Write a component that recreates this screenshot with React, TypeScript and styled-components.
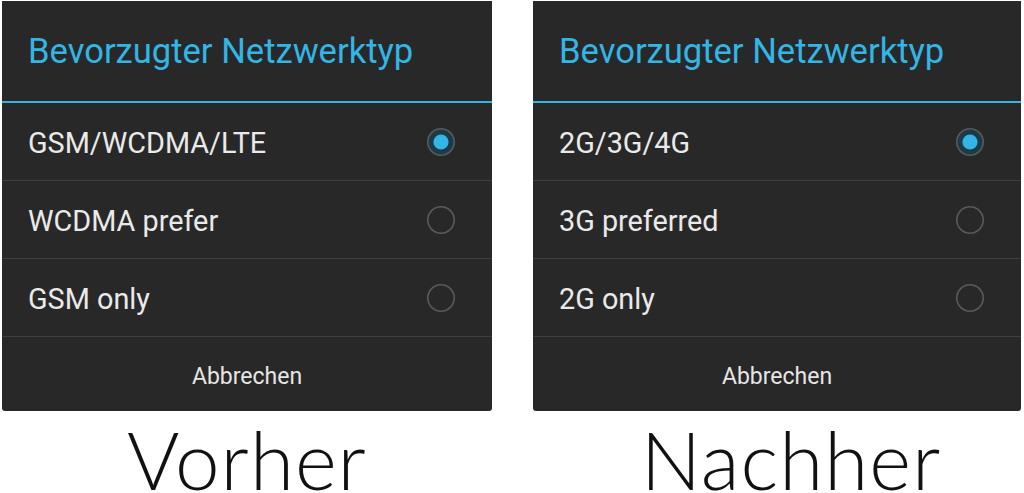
import React from "react";
import styled, { createGlobalStyle } from "styled-components";

const GlobalStyle = createGlobalStyle`
  html, body {
    margin: 0;
    padding: 0;
    background: #ffffff;
  }
  body {
    font-family: Roboto, "Liberation Sans", sans-serif;
  }
`;

const Page = styled.div`
  width: 1024px;
  height: 493px;
  display: grid;
  grid-template-columns: 490px 488px;
  column-gap: 41px;
  padding: 1px 0 0 2px;
  box-sizing: border-box;
  overflow: hidden;
`;

const Column = styled.div`
  display: flex;
  flex-direction: column;
`;

const Dialog = styled.div`
  background: #282828;
  border-radius: 0 0 3px 3px;
  display: flex;
  flex-direction: column;
  height: 410px;
`;

const Title = styled.div`
  height: 102px;
  display: flex;
  align-items: center;
  padding: 0 0 0 26px;
  color: #33b5e5;
  font-size: 34.6px;
  border-bottom: 2px solid #33b5e5;
  box-sizing: border-box;
`;

const Row = styled.div`
  height: 78px;
  display: flex;
  align-items: center;
  justify-content: space-between;
  padding: 0 36px 0 26px;
  border-bottom: 1px solid #3f3f3f;
  box-sizing: border-box;
`;

const RowText = styled.span`
  color: #eaeaea;
  font-size: 28.8px;
  padding-top: 2px;
`;

const Footer = styled.div`
  flex: 1;
  display: flex;
  align-items: center;
  justify-content: center;
  padding-top: 5px;
  color: #e6e6e6;
  font-size: 23px;
`;

const Label = styled.div<{ $shift: number }>`
  text-align: center;
  font-family: Lato, "Open Sans", sans-serif;
  font-weight: 300;
  font-size: 80px;
  line-height: 60px;
  color: #111;
  margin-top: 18px;
  letter-spacing: 1px;
  padding-left: ${(p) => p.$shift}px;
`;

const Radio = ({ checked }: { checked: boolean }) => (
  <svg width="30" height="30" viewBox="0 0 30 30">
    <circle
      cx="15"
      cy="15"
      r="13.2"
      fill={checked ? "#1c3a47" : "none"}
      stroke="#5a5a5a"
      strokeWidth="1.6"
    />
    {checked && <circle cx="15" cy="15" r="7.6" fill="#33b5e5" />}
  </svg>
);

type DialogData = {
  options: string[];
  label: string;
  shift: number;
};

const dialogs: DialogData[] = [
  { options: ["GSM/WCDMA/LTE", "WCDMA prefer", "GSM only"], label: "Vorher", shift: 0 },
  { options: ["2G/3G/4G", "3G preferred", "2G only"], label: "Nachher", shift: 28 },
];

const App = () => (
  <>
    <GlobalStyle />
    <Page>
      {dialogs.map((d) => (
        <Column key={d.label}>
          <Dialog>
            <Title>Bevorzugter Netzwerktyp</Title>
            {d.options.map((o, i) => (
              <Row key={o}>
                <RowText>{o}</RowText>
                <Radio checked={i === 0} />
              </Row>
            ))}
            <Footer>Abbrechen</Footer>
          </Dialog>
          <Label $shift={d.shift}>{d.label}</Label>
        </Column>
      ))}
    </Page>
  </>
);

export default App;
